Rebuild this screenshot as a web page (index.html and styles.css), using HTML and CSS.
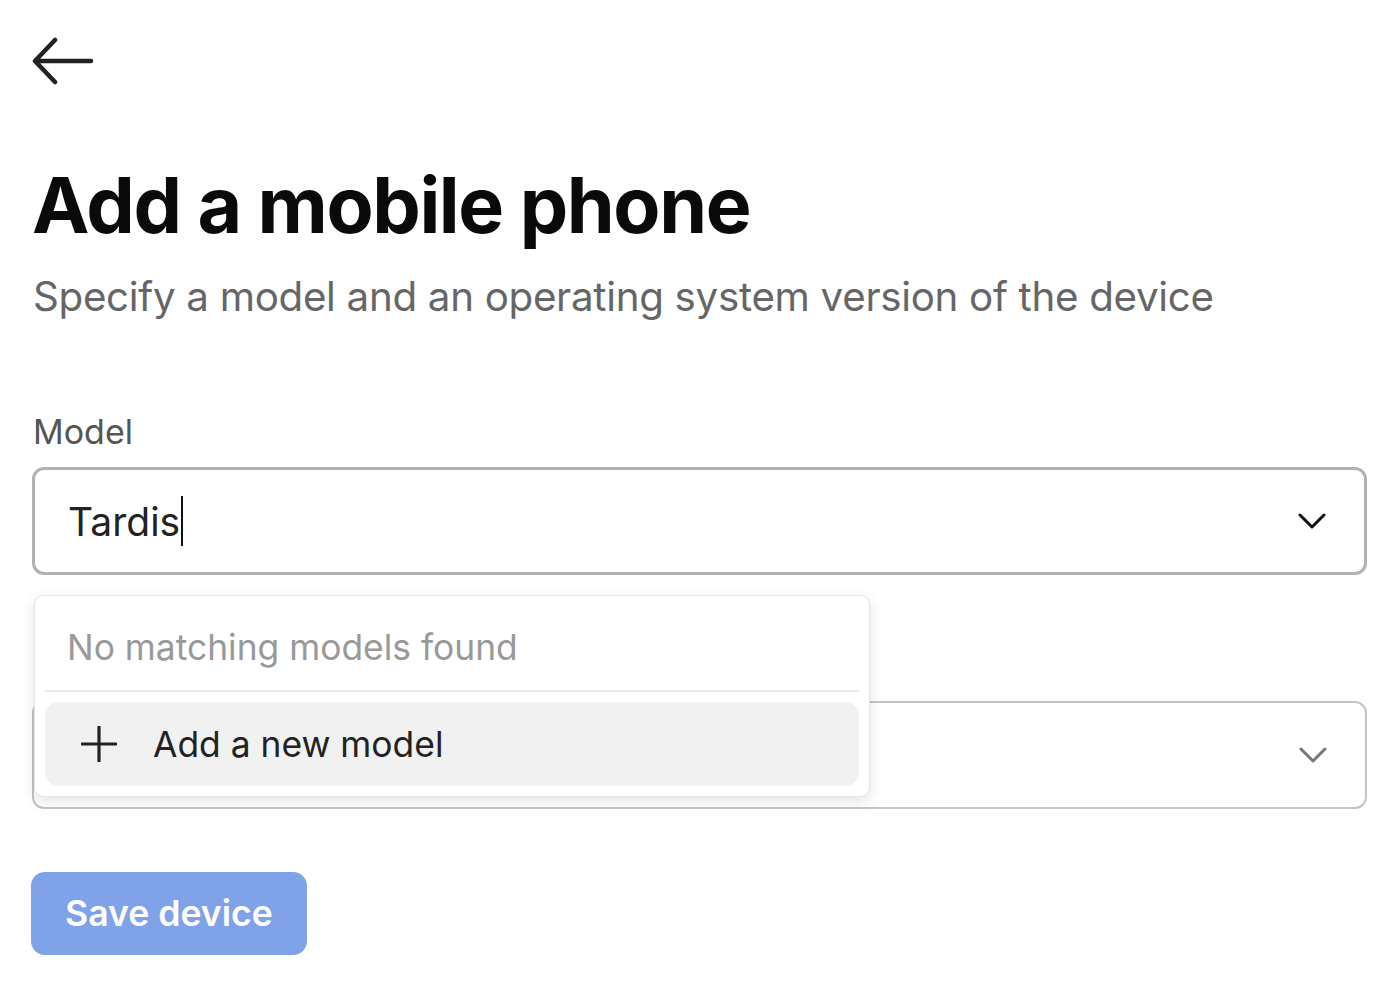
FILE: index.html
```html
<!DOCTYPE html>
<html>
<head>
<meta charset="utf-8">
<link rel="stylesheet" href="styles.css">
</head>
<body>
<div class="page">
  <button class="back" aria-label="Back">
    <svg width="62" height="50" viewBox="0 0 62 50"><path d="M59 25H3M23 4L3 25l20 21" fill="none" stroke="#222" stroke-width="4.5" stroke-linecap="round" stroke-linejoin="round"/></svg>
  </button>
  <h1 class="title">Add a mobile phone</h1>
  <p class="subtitle">Specify a model and an operating system version of the device</p>

  <div class="field">
    <label class="label">Model</label>
    <div class="select focused">
      <span class="value">Tardis<span class="caret"></span></span>
      <svg class="chev" width="28" height="16" viewBox="0 0 28 16"><path d="M2 2l12 12L26 2" fill="none" stroke="#111" stroke-width="3" stroke-linecap="round" stroke-linejoin="round"/></svg>
    </div>
    <div class="menu">
      <div class="empty">No matching models found</div>
      <div class="divider"></div>
      <div class="item">
        <svg width="36" height="36" viewBox="0 0 36 36"><path d="M18 1v34M1 18h34" stroke="#222" stroke-width="3.2" stroke-linecap="round"/></svg>
        <span>Add a new model</span>
      </div>
    </div>
  </div>

  <div class="field second">
    <label class="label">Operating system</label>
    <div class="select">
      <span class="value"></span>
      <svg class="chev" width="28" height="16" viewBox="0 0 28 16"><path d="M2 2l12 12L26 2" fill="none" stroke="#777" stroke-width="3" stroke-linecap="round" stroke-linejoin="round"/></svg>
    </div>
  </div>

  <button class="save">Save device</button>
</div>
</body>
</html>
```
FILE: styles.css
```css
* { box-sizing: border-box; }
html, body { margin: 0; padding: 0; background: #fff; }
body { font-family: Inter, "Noto Sans", sans-serif; color: #111; }
.page { padding: 36px 30px 0 32px; display: flex; flex-direction: column; align-items: flex-start; }
.back { border: 0; background: none; padding: 0; margin: 0; width: 62px; height: 50px; display: flex; }
.title { font-size: 77px; font-weight: 700; letter-spacing: -1.4px; margin: 74px 0 0 0; line-height: 90px; color: #0a0a0a; }
.subtitle { font-size: 40.3px; font-weight: 400; color: #666; margin: 22px 0 0 1px; line-height: 50px; letter-spacing: -0.3px; }
.field { position: relative; width: 1335px; display: flex; flex-direction: column; }
.label { font-size: 34px; color: #555; line-height: 44px; margin-top: 88px; margin-left: 1px; }
.select { margin-top: 13px; height: 108px; border: 2px solid #c4c4c4; border-radius: 12px; display: flex; align-items: center; justify-content: space-between; padding: 0 38px 0 33px; }
.select.focused { border: 3px solid #b2b2b2; }
.value { font-size: 39px; color: #222; display: flex; align-items: center; }
.caret { display: inline-block; width: 2px; height: 50px; background: #111; margin-left: 1px; }
.chev { flex: none; }
.second .label { margin-top: 69px; }
.menu { position: absolute; top: calc(100% + 20px); left: 2px; width: 836px; background: #fff; border: 1px solid #e6e6e6; border-radius: 10px; box-shadow: 0 4px 14px rgba(0,0,0,0.12); padding: 0 10px 10px 10px; z-index: 5; }
.empty { font-size: 35.4px; color: #999; padding: 30px 0 20px 22px; line-height: 44px; }
.divider { height: 2px; background: #e8e8e8; }
.item { margin-top: 10px; height: 84px; background: #f1f1f1; border-radius: 14px; display: flex; align-items: center; padding-left: 36px; gap: 36px; font-size: 35.4px; color: #222; }
.save { margin-top: 63px; margin-left: -1px; border: 0; background: #7fa2e8; color: #fff; font-family: Inter, sans-serif; font-weight: 600; font-size: 35.6px; height: 83px; padding: 0 34px; border-radius: 14px; }
```
